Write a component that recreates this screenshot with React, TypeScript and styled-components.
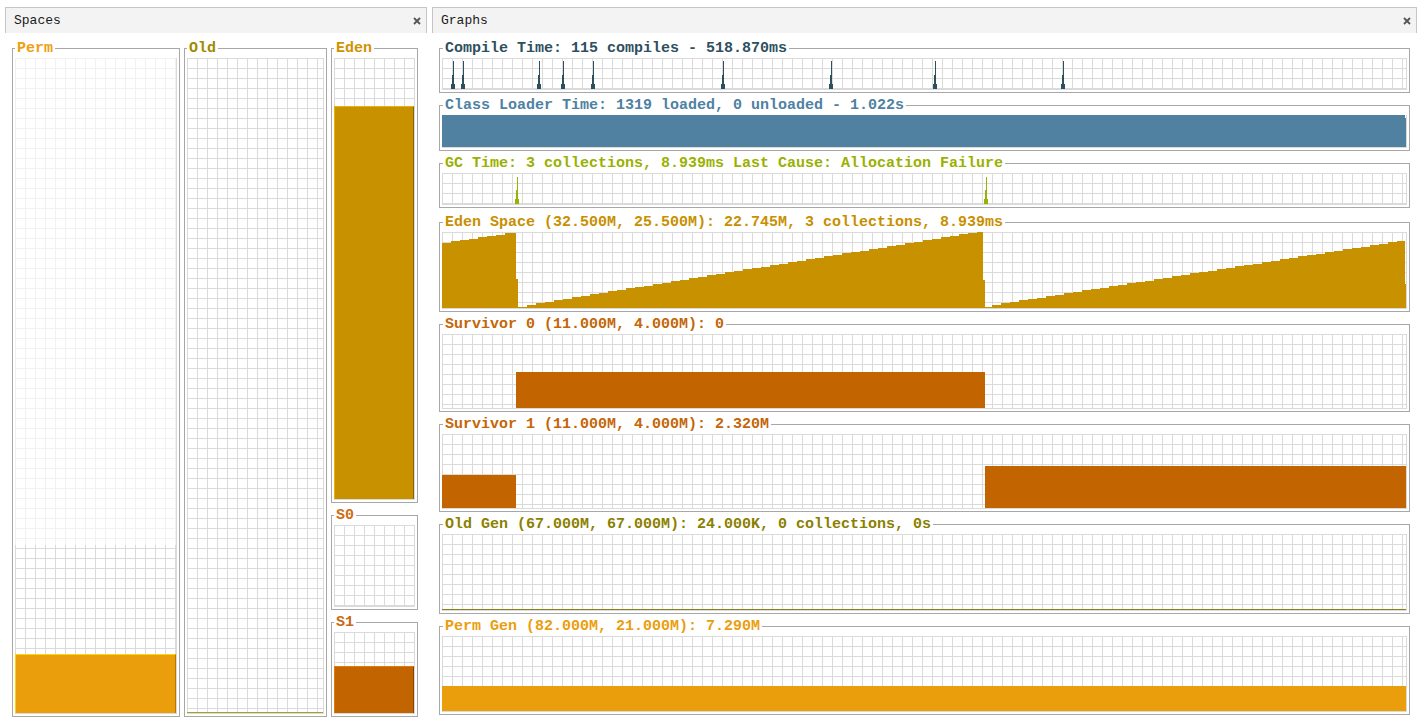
import React from 'react';
import styled, { createGlobalStyle } from 'styled-components';

const GlobalStyle = createGlobalStyle`
  html, body { margin: 0; padding: 0; background: #ffffff; }
  body { font-family: "Liberation Mono", "DejaVu Sans Mono", monospace; }
  #root { width: 1419px; height: 728px; overflow: hidden; }
`;

const LINE = '#dadada';
const FRAME = '#a8a8a8';

const Page = styled.div`
  display: flex;
  gap: 5px;
  padding: 7px 0 0 5px;
  height: 728px;
  box-sizing: border-box;
  overflow: hidden;
`;

const Panel = styled.section<{ $w: number }>`
  width: ${(p) => p.$w}px;
  display: flex;
  flex-direction: column;
  flex: none;
`;

const TabBar = styled.div`
  height: 26px;
  box-sizing: border-box;
  display: flex;
  align-items: center;
  justify-content: space-between;
  padding: 0 5px 0 8px;
  background: #f3f3f3;
  border: 1px solid #c6c6c6;
  border-bottom: none;
`;

const TabLabel = styled.span`
  font-family: "Liberation Mono", monospace;
  font-size: 13px;
  color: #1a1a1a;
  line-height: 16px;
`;

const CloseSvg = styled.svg`
  display: block;
  width: 8px;
  height: 8px;
`;

const CloseIcon = () => (
  <CloseSvg viewBox="0 0 8 8">
    <path d="M1 1L7 7M7 1L1 7" stroke="#555" strokeWidth="1.8" fill="none" />
  </CloseSvg>
);

const SpacesBody = styled.div`
  flex: 1;
  display: flex;
  gap: 4px;
  padding: 7px 9px 11px 7px;
  min-height: 0;
`;

const Column = styled.div<{ $w: number }>`
  width: ${(p) => p.$w}px;
  display: flex;
  flex-direction: column;
  gap: 4px;
`;

const Box = styled.fieldset<{ $w?: number; $h?: number; $grow?: boolean; $mb?: number }>`
  margin: 0 0 ${(p) => p.$mb ?? 0}px 0;
  padding: 2px 2px 2px 2px;
  border: 1px solid ${FRAME};
  min-width: 0;
  min-height: 0;
  box-sizing: border-box;
  display: flex;
  flex-direction: column;
  ${(p) => (p.$w ? `width: ${p.$w}px; flex: none;` : '')}
  ${(p) => (p.$h ? `height: ${p.$h}px; flex: none;` : '')}
  ${(p) => (p.$grow ? 'flex: 1;' : '')}
`;

const Legend = styled.legend<{ $c: string; $ml: number }>`
  padding: 1px 2px 0 2px;
  margin-left: ${(p) => p.$ml}px;
  font-family: "Liberation Mono", "DejaVu Sans Mono", monospace;
  font-weight: bold;
  font-size: 15px;
  line-height: 15px;
  color: ${(p) => p.$c};
  white-space: pre;
`;

const gridBg = `
  background-color: #ffffff;
  background-image:
    linear-gradient(to right, ${LINE} 1px, transparent 1px),
    linear-gradient(to bottom, ${LINE} 1px, transparent 1px);
  background-size: 10px 10px;
  border-right: 1px solid ${LINE};
  border-bottom: 1px solid ${LINE};
  box-sizing: border-box;
`;

const SpaceGrid = styled.div`
  ${gridBg}
  flex: 1;
  display: flex;
  flex-direction: column;
  min-height: 0;
`;

const Uncommitted = styled.div`
  flex-basis: 0;
  background: rgba(255, 255, 255, 0.62);
`;

const Free = styled.div`
  flex-basis: 0;
`;

const Fill = styled.div<{ $c: string; $light?: string; $dark?: string }>`
  flex-basis: 0;
  min-height: 1px;
  box-sizing: border-box;
  background: ${(p) => p.$c};
  ${(p) => (p.$light ? `border-top: 1px solid ${p.$light}; border-left: 1px solid ${p.$light};` : '')}
  ${(p) => (p.$dark ? `border-right: 1px solid ${p.$dark};` : '')}
`;

const GraphsBody = styled.div`
  flex: 1;
  display: flex;
  flex-direction: column;
  gap: 4px;
  padding: 7px 7px 0 7px;
`;

const GraphGrid = styled.div<{ $h: number }>`
  ${gridBg}
  height: ${(p) => p.$h}px;
  flex: none;
`;

const Chart = styled.svg`
  display: block;
  width: 100%;
  height: 100%;
  shape-rendering: crispEdges;
`;

type Seg = { x0: number; x1: number; y0: number; y1: number };

function stairPath(segs: Seg[], bottom: number, step = 9): string {
  let d = '';
  for (const s of segs) {
    d += `M${s.x0} ${bottom}`;
    const w = s.x1 - s.x0;
    for (let x = s.x0; x < s.x1; x += step) {
      const xe = Math.min(x + step, s.x1);
      const t = w === 0 ? 0 : (xe - s.x0) / w;
      const y = Math.round(s.y0 + (s.y1 - s.y0) * t);
      d += `L${x} ${y}L${xe} ${y}`;
    }
    d += `L${s.x1} ${bottom}Z`;
  }
  return d;
}

const W = 964;

const Spike = ({ x, c, top, bottom }: { x: number; c: string; top: number; bottom: number }) => (
  <g fill={c}>
    <rect x={x} y={top} width={1} height={bottom - top} />
    <rect x={x - 1} y={bottom - 14} width={2} height={14} />
    <rect x={x - 2} y={bottom - 5} width={4} height={5} />
  </g>
);

const COMPILE = '#2f4f5f';
const CLASS = '#5181a0';
const GC = '#99b100';
const EDEN = '#c89100';
const SURV = '#c26400';
const OLD = '#8b7f00';
const PERM = '#eb9e0c';

const compileSpikes = [11, 21, 97, 121, 151, 281, 389, 493, 621];

const edenPath = stairPath(
  [
    { x0: 0, x1: 74, y0: 12, y1: 1 },
    { x0: 74, x1: 76, y0: 47, y1: 47 },
    { x0: 76, x1: 85, y0: 75, y1: 75 },
    { x0: 85, x1: 541, y0: 74, y1: 0 },
    { x0: 541, x1: 543, y0: 48, y1: 48 },
    { x0: 543, x1: 550, y0: 75, y1: 75 },
    { x0: 550, x1: 963, y0: 74, y1: 9 },
    { x0: 963, x1: 964, y0: 52, y1: 52 },
  ],
  76
);

type Graph = {
  title: string;
  color: string;
  h: number;
  mb?: number;
  draw: (ch: number) => React.ReactNode;
};

const graphs: Graph[] = [
  {
    title: 'Compile Time: 115 compiles - 518.870ms',
    color: COMPILE,
    h: 32,
    draw: (ch) => compileSpikes.map((x) => <Spike key={x} x={x} c={COMPILE} top={3} bottom={ch} />),
  },
  {
    title: 'Class Loader Time: 1319 loaded, 0 unloaded - 1.022s',
    color: '#4e81a2',
    h: 33,
    draw: (ch) => (
      <>
        <rect x={0} y={0} width={W} height={ch} fill={CLASS} />
        <rect x={W - 1} y={0} width={1} height={3} fill="#ffffff" />
      </>
    ),
  },
  {
    title: 'GC Time: 3 collections, 8.939ms Last Cause: Allocation Failure',
    color: GC,
    h: 32,
    mb: 2,
    draw: (ch) => (
      <>
        <Spike x={75} c={GC} top={4} bottom={ch} />
        <Spike x={544} c={GC} top={4} bottom={ch} />
      </>
    ),
  },
  {
    title: 'Eden Space (32.500M, 25.500M): 22.745M, 3 collections, 8.939ms',
    color: '#c88f00',
    h: 77,
    draw: () => <path d={edenPath} fill={EDEN} />,
  },
  {
    title: 'Survivor 0 (11.000M, 4.000M): 0',
    color: '#c46608',
    h: 75,
    draw: (ch) => <rect x={74} y={38} width={469} height={ch - 38} fill={SURV} />,
  },
  {
    title: 'Survivor 1 (11.000M, 4.000M): 2.320M',
    color: '#c46608',
    h: 75,
    draw: (ch) => (
      <>
        <rect x={0} y={41} width={74} height={ch - 41} fill={SURV} />
        <rect x={543} y={32} width={W - 543} height={ch - 32} fill={SURV} />
      </>
    ),
  },
  {
    title: 'Old Gen (67.000M, 67.000M): 24.000K, 0 collections, 0s',
    color: OLD,
    h: 77,
    draw: (ch) => <rect x={0} y={ch - 1} width={W} height={1} fill="#85851c" />,
  },
  {
    title: 'Perm Gen (82.000M, 21.000M): 7.290M',
    color: PERM,
    h: 76,
    draw: (ch) => <rect x={0} y={50} width={W} height={ch - 50} fill={PERM} />,
  },
];

type Space = {
  max: number;
  committed: number;
  used: number;
};

const SpaceBars = ({ s, c, light, dark }: { s: Space; c: string; light?: string; dark?: string }) => (
  <SpaceGrid>
    {s.max > s.committed && <Uncommitted style={{ flexGrow: s.max - s.committed }} />}
    <Free style={{ flexGrow: s.committed - s.used }} />
    <Fill $c={c} $light={light} $dark={dark} style={{ flexGrow: s.used }} />
  </SpaceGrid>
);

export default function App() {
  return (
    <>
      <GlobalStyle />
      <Page>
        <Panel $w={422}>
          <TabBar>
            <TabLabel>Spaces</TabLabel>
            <CloseIcon />
          </TabBar>
          <SpacesBody>
            <Box $w={168}>
              <Legend $c="#eea010" $ml={0}>Perm</Legend>
              <SpaceBars s={{ max: 82, committed: 21, used: 7.29 }} c={PERM} light="#ffd400" dark="#b47800" />
            </Box>
            <Box $w={143}>
              <Legend $c="#a08a00" $ml={0}>Old</Legend>
              <SpaceBars s={{ max: 67, committed: 67, used: 0.024 }} c="#a8a020" />
            </Box>
            <Column $w={87}>
              <Box $grow>
                <Legend $c="#d09300" $ml={0}>Eden</Legend>
                <SpaceBars s={{ max: 25.5, committed: 25.5, used: 22.745 }} c={EDEN} light="#e8b400" dark="#8a6400" />
              </Box>
              <Box $h={103}>
                <Legend $c="#d06c10" $ml={0}>S0</Legend>
                <SpaceBars s={{ max: 4, committed: 4, used: 0 }} c="transparent" />
              </Box>
              <Box $h={103}>
                <Legend $c="#c86a12" $ml={0}>S1</Legend>
                <SpaceBars s={{ max: 4, committed: 4, used: 2.32 }} c={SURV} light="#e07c00" dark="#8a4400" />
              </Box>
            </Column>
          </SpacesBody>
        </Panel>
        <Panel $w={985}>
          <TabBar>
            <TabLabel>Graphs</TabLabel>
            <CloseIcon />
          </TabBar>
          <GraphsBody>
            {graphs.map((g) => {
              const ch = g.h - 1;
              return (
                <Box key={g.title} $mb={g.mb}>
                  <Legend $c={g.color} $ml={1}>{g.title}</Legend>
                  <GraphGrid $h={g.h}>
                    <Chart viewBox={`0 0 ${W} ${ch}`} preserveAspectRatio="none">
                      {g.draw(ch)}
                    </Chart>
                  </GraphGrid>
                </Box>
              );
            })}
          </GraphsBody>
        </Panel>
      </Page>
    </>
  );
}
